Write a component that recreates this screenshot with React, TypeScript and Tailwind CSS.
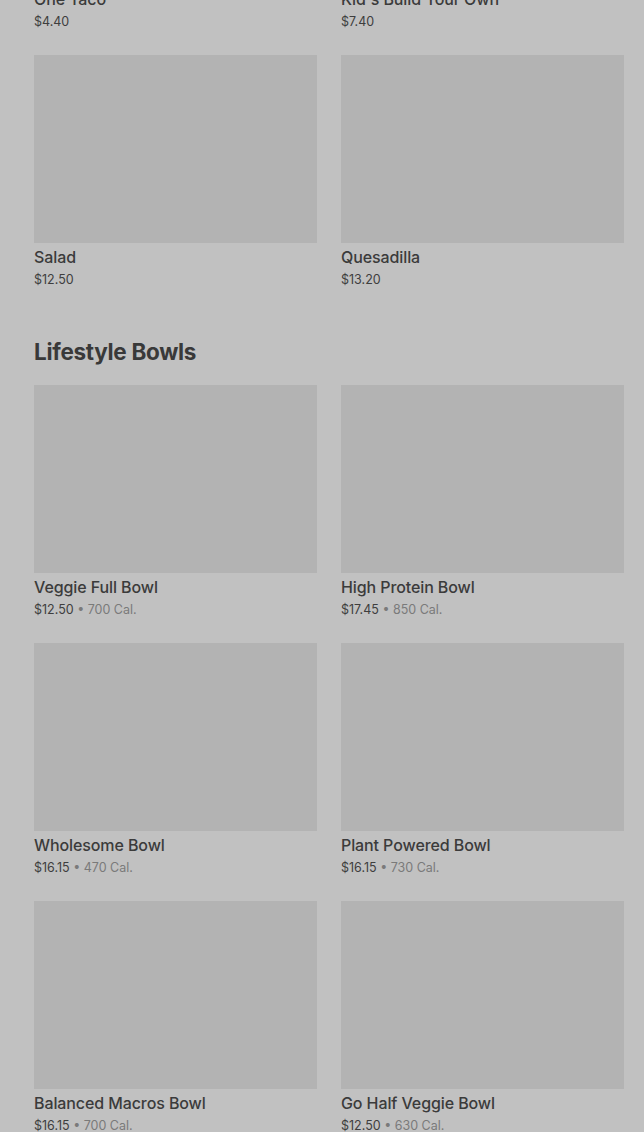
type Item = { name: string; price: string; cal?: string };

const topItems: Item[] = [
  { name: "One Taco", price: "$4.40" },
  { name: "Kid's Build Your Own", price: "$7.40" },
  { name: "Salad", price: "$12.50" },
  { name: "Quesadilla", price: "$13.20" },
];

const bowls: Item[] = [
  { name: "Veggie Full Bowl", price: "$12.50", cal: "700 Cal." },
  { name: "High Protein Bowl", price: "$17.45", cal: "850 Cal." },
  { name: "Wholesome Bowl", price: "$16.15", cal: "470 Cal." },
  { name: "Plant Powered Bowl", price: "$16.15", cal: "730 Cal." },
  { name: "Balanced Macros Bowl", price: "$16.15", cal: "700 Cal." },
  { name: "Go Half Veggie Bowl", price: "$12.50", cal: "630 Cal." },
];

function Card({ item }: { item: Item }) {
  return (
    <div>
      <div className="h-[188px] w-full bg-[#b3b3b3]" />
      <p className="mt-[3px] text-[16px] font-medium leading-[22px] tracking-[-0.1px] text-[#3b3b3b]">
        {item.name}
      </p>
      <p className="mt-[2px] text-[12.5px] leading-[20px] text-[#3e3e3e]">
        {item.price}
        {item.cal && (
          <span className="text-[#7a7a7a]"> • {item.cal}</span>
        )}
      </p>
    </div>
  );
}

export default function App() {
  return (
    <div
      className="h-[1132px] overflow-hidden bg-[#c1c1c1] pl-[34px] pr-[20px]"
      style={{ fontFamily: "Inter, 'Noto Sans', sans-serif" }}
    >
      <div className="-mt-[203px] grid grid-cols-2 gap-x-[24px] gap-y-[23px]">
        {topItems.map((it) => (
          <Card key={it.name} item={it} />
        ))}
      </div>

      <h2 className="mt-[48px] text-[22.5px] font-bold leading-[28px] tracking-[-0.3px] text-[#393939]">
        Lifestyle Bowls
      </h2>

      <div className="mt-[19px] grid grid-cols-2 gap-x-[24px] gap-y-[23px]">
        {bowls.map((it) => (
          <Card key={it.name} item={it} />
        ))}
      </div>
    </div>
  );
}
